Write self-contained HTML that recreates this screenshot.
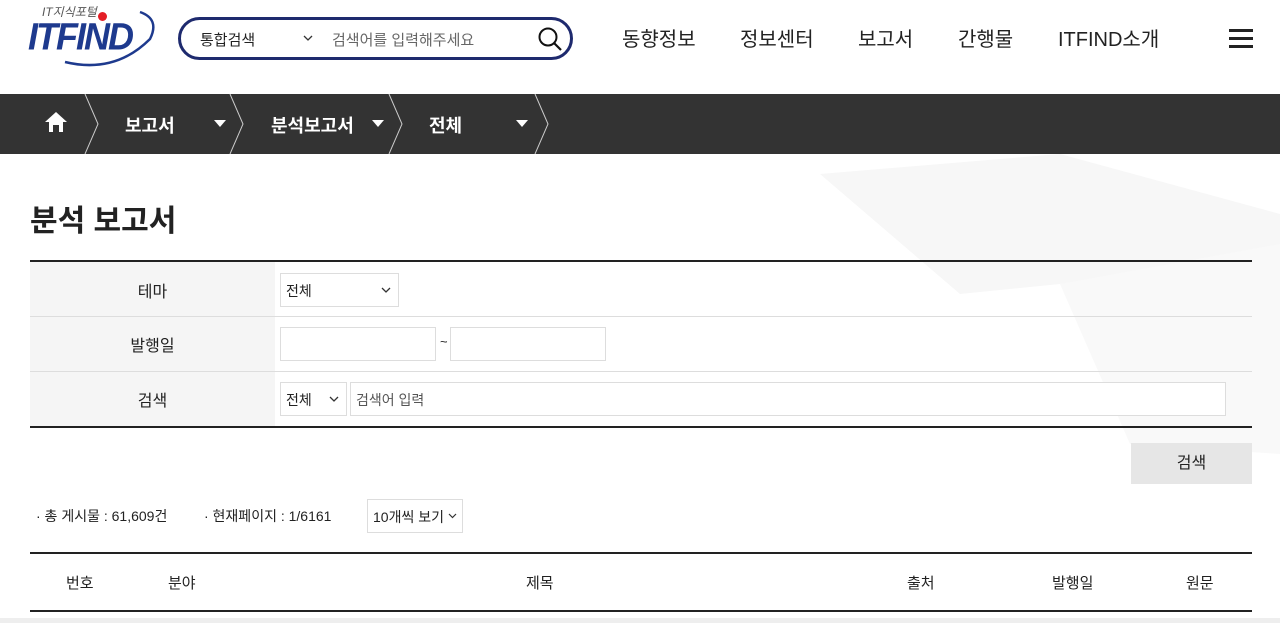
<!DOCTYPE html>
<html><head><meta charset="utf-8"><style>
*{box-sizing:border-box;margin:0;padding:0}
body{width:1280px;height:623px;overflow:hidden;background:#fff;font-family:"Liberation Sans","Noto Sans CJK KR",sans-serif;color:#222;position:relative}
.a{position:absolute;white-space:nowrap}
.nav{font-size:20px;color:#222;top:23px}
.bc{top:94px;left:0;width:1280px;height:60px;background:#333}
.bct{color:#fff;font-size:18px;top:112px;font-weight:bold}
.tri{width:0;height:0;border-left:6px solid transparent;border-right:6px solid transparent;border-top:7px solid #fff;top:120px}
.lbl{font-size:16px;color:#222;text-align:center;width:245px;left:30px}
.inp{border:1px solid #ddd;background:#fff;height:34px;font-size:14px;padding:7px 5px}
.th{font-size:15px;top:572px}
.chev{position:absolute;right:7px;top:13px}
</style></head><body>
<svg class="a" style="left:0;top:154px" width="1280" height="300"><polygon points="820,20 1060,0 1280,60 1280,110 1060,130 960,140" fill="#f7f7f7"/><polygon points="1060,130 1280,90 1280,300 1130,290" fill="#f9f9f9"/></svg>
<!-- logo -->
<div class="a" style="left:42px;top:3px;font-size:12px;font-style:italic;color:#555">IT지식포털</div>
<div class="a" style="left:98px;top:12px;width:9px;height:9px;border-radius:50%;background:#e41e26"></div>
<div class="a" style="left:28px;top:16px;font-size:36px;font-weight:bold;font-style:italic;color:#1e3a8e;letter-spacing:-2px;transform:scaleY(1.05)">ITFIND</div>
<svg class="a" style="left:55px;top:4px" width="105" height="68"><path d="M10 58 Q60 70 95 35 Q105 15 85 8" stroke="#1e3a8e" stroke-width="2.5" fill="none"/></svg>
<!-- search -->
<div class="a" style="left:178px;top:17px;width:395px;height:43px;border:3px solid #1e2a6e;border-radius:22px"></div>
<div class="a" style="left:200px;top:29px;font-size:15px">통합검색</div>
<svg class="a" style="left:303px;top:35px" width="10" height="7"><path d="M1 1L5 5L9 1" stroke="#333" stroke-width="1.3" fill="none"/></svg>
<div class="a" style="left:332px;top:29px;font-size:15px;color:#666">검색어를 입력해주세요</div>
<svg class="a" style="left:537px;top:26px" width="26" height="26"><circle cx="11" cy="11" r="8.5" stroke="#111" stroke-width="2" fill="none"/><path d="M17 17L24 24" stroke="#111" stroke-width="2.2"/></svg>
<div class="a nav" style="left:622px">동향정보</div>
<div class="a nav" style="left:740px">정보센터</div>
<div class="a nav" style="left:858px">보고서</div>
<div class="a nav" style="left:958px">간행물</div>
<div class="a nav" style="left:1058px">ITFIND소개</div>
<div class="a" style="left:1229px;top:29px;width:24px;height:3px;background:#222;box-shadow:0 8px #222,0 16px #222"></div>
<!-- breadcrumb -->
<div class="a bc"></div>
<svg class="a" style="left:0;top:94px" width="560" height="60"><g stroke="#ccc" stroke-width="1" fill="none"><path d="M85 0L98 30L85 60"/><path d="M230 0L243 30L230 60"/><path d="M389 0L402 30L389 60"/><path d="M535 0L548 30L535 60"/></g><path d="M45 28L56 18L67 28H63V38H59V31H53V38H49V28Z" fill="#fff"/></svg>
<div class="a bct" style="left:125px">보고서</div><div class="a tri" style="left:214px"></div>
<div class="a bct" style="left:271px">분석보고서</div><div class="a tri" style="left:372px"></div>
<div class="a bct" style="left:429px">전체</div><div class="a tri" style="left:516px"></div>
<div class="a" style="left:30px;top:196px;font-size:30px;font-weight:bold;color:#222">분석 보고서</div>
<!-- form -->
<div class="a" style="left:30px;top:260px;width:1222px;height:168px;border-top:2px solid #222;border-bottom:2px solid #222"></div>
<div class="a" style="left:30px;top:262px;width:245px;height:164px;background:#f5f5f5"></div>
<div class="a" style="left:30px;top:316px;width:1222px;height:1px;background:#ddd"></div>
<div class="a" style="left:30px;top:371px;width:1222px;height:1px;background:#ddd"></div>
<div class="a lbl" style="top:278px">테마</div>
<div class="a lbl" style="top:332px">발행일</div>
<div class="a lbl" style="top:387px">검색</div>
<div class="a inp" style="left:280px;top:273px;width:119px">전체<svg class="chev" width="10" height="7"><path d="M1 1L5 5L9 1" stroke="#333" stroke-width="1.3" fill="none"/></svg></div>
<div class="a inp" style="left:280px;top:327px;width:156px"></div>
<div class="a" style="left:440px;top:334px;font-size:13px">~</div>
<div class="a inp" style="left:450px;top:327px;width:156px"></div>
<div class="a inp" style="left:280px;top:382px;width:67px">전체<svg class="chev" width="10" height="7"><path d="M1 1L5 5L9 1" stroke="#333" stroke-width="1.3" fill="none"/></svg></div>
<div class="a inp" style="left:350px;top:382px;width:876px;color:#555">검색어 입력</div>
<div class="a" style="left:1131px;top:443px;width:121px;height:41px;background:#e6e6e6;font-size:16px;text-align:center;line-height:41px">검색</div>
<div class="a" style="left:36px;top:506px;font-size:14px">· 총 게시물 : 61,609건</div>
<div class="a" style="left:204px;top:506px;font-size:14px">· 현재페이지 : 1/6161</div>
<div class="a inp" style="left:367px;top:499px;width:96px;height:34px;font-size:14px;padding:7px 5px">10개씩 보기<svg class="chev" style="right:5px" width="9" height="6"><path d="M1 1L4.5 4.5L8 1" stroke="#333" stroke-width="1.2" fill="none"/></svg></div>
<div class="a" style="left:30px;top:552px;width:1222px;height:60px;border-top:2px solid #222;border-bottom:2px solid #222"></div>
<div class="a th" style="left:66px">번호</div>
<div class="a th" style="left:168px">분야</div>
<div class="a th" style="left:526px">제목</div>
<div class="a th" style="left:907px">출처</div>
<div class="a th" style="left:1052px">발행일</div>
<div class="a th" style="left:1186px">원문</div>
<div class="a" style="left:0;top:618px;width:1280px;height:5px;background:#eee"></div>
</body></html>
